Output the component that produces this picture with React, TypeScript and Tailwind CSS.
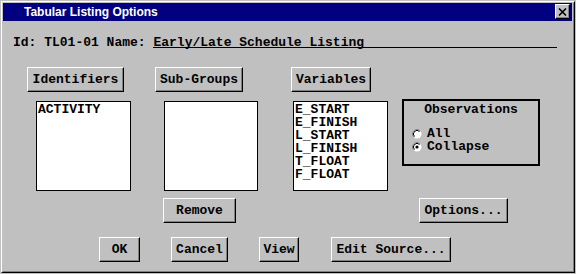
import React from "react";

const mono = "font-['Liberation_Mono',monospace] font-bold text-[13px] text-black";

function Btn({ label, className }: { label: string; className: string }) {
    return (
        <div
            className={`h-[25px] flex items-center justify-center bg-[#c0c0c0] border-t border-l border-white border-r border-b border-r-black border-b-black shadow-[inset_-1px_-1px_0_#808080] leading-[13px] ${className}`}
        >
            {label}
        </div>
    );
}

function ListBox({ items, className }: { items: string[]; className: string }) {
    return (
        <div className={`h-[90px] bg-white border border-black pl-px pt-px leading-[13px] ${className}`}>
            {items.map((it) => (
                <div key={it}>{it}</div>
            ))}
        </div>
    );
}

function Radio({ on }: { on?: boolean }) {
    return (
        <svg width="10" height="10" viewBox="0 0 10 10" className="shrink-0">
            <circle cx="5" cy="5" r="4.5" fill="white" />
            <path d="M1.8 8.2 A4.5 4.5 0 0 1 8.2 1.8" fill="none" stroke="#808080" strokeWidth="1" />
            <path d="M2.5 7.5 A3.5 3.5 0 0 1 7.5 2.5" fill="none" stroke="black" strokeWidth="1" />
            {on && <circle cx="5" cy="5" r="1.6" fill="black" />}
        </svg>
    );
}

export default function App() {
    return (
        <div className="w-[576px] h-[274px] bg-[#c0c0c0] p-px">
            <div className="h-full border-t border-l border-white border-r border-b border-r-black border-b-black">
                <div className="h-full border border-[#c0c0c0] border-r-[#808080] border-b-[#808080]">
                    <div className="h-[18px] mr-px bg-[#000080] flex items-start justify-between">
                        <span className="pl-[21px] leading-[18px] text-[12px] font-bold text-white font-['Liberation_Sans',Arial,sans-serif]">
                            Tabular Listing Options
                        </span>
                        <div className="mt-px mr-[2px] w-[15px] h-[15px] bg-[#c0c0c0] border-t border-l border-white border-r border-b border-r-black border-b-black shadow-[inset_-1px_-1px_0_#808080] flex items-center justify-center">
                            <svg width="9" height="8" viewBox="0 0 9 8">
                                <path d="M1 0.5 L8 7.5 M8 0.5 L1 7.5" stroke="black" strokeWidth="1.6" />
                            </svg>
                        </div>
                    </div>

                    <div className={`${mono}`}>
                        <div className="mt-[17px] ml-[10px] mr-[16px] flex leading-[9px] whitespace-pre">
                            <span>Id: TL01-01 Name: </span>
                            <span className="flex-1 border-b border-black">Early/Late Schedule Listing</span>
                        </div>

                        <div className="mt-[19px] flex items-start">
                            <div className="ml-[24px] flex flex-col">
                                <Btn label="Identifiers" className="w-[97px]" />
                                <ListBox items={["ACTIVITY"]} className="mt-[9px] ml-[9px] w-[95px]" />
                            </div>
                            <div className="ml-[24px] flex flex-col">
                                <Btn label="Sub-Groups" className="w-[88px]" />
                                <ListBox items={[]} className="mt-[9px] ml-[9px] w-[94px]" />
                            </div>
                            <div className="ml-[33px] flex flex-col">
                                <Btn label="Variables" className="w-[80px]" />
                                <ListBox
                                    items={["E_START", "E_FINISH", "L_START", "L_FINISH", "T_FLOAT", "F_FLOAT"]}
                                    className="mt-[9px] ml-[2px] w-[95px]"
                                />
                            </div>
                            <div className="ml-[14px] mt-[32px] w-[138px] h-[67px] border-2 border-black pt-[2px] leading-[13px]">
                                <div className="text-center">Observations</div>
                                <div className="mt-[11px] ml-[8px] flex items-center gap-[5px]">
                                    <Radio />
                                    <span>All</span>
                                </div>
                                <div className="ml-[8px] flex items-center gap-[5px]">
                                    <Radio on />
                                    <span>Collapse</span>
                                </div>
                            </div>
                        </div>

                        <div className="mt-[7px] flex">
                            <Btn label="Remove" className="ml-[160px] w-[73px]" />
                            <Btn label="Options..." className="ml-[183px] w-[89px]" />
                        </div>

                        <div className="mt-[14px] flex">
                            <Btn label="OK" className="ml-[96px] w-[41px]" />
                            <Btn label="Cancel" className="ml-[31px] w-[57px]" />
                            <Btn label="View" className="ml-[31px] w-[40px]" />
                            <Btn label="Edit Source..." className="ml-[32px] w-[120px]" />
                        </div>
                    </div>
                </div>
            </div>
        </div>
    );
}
